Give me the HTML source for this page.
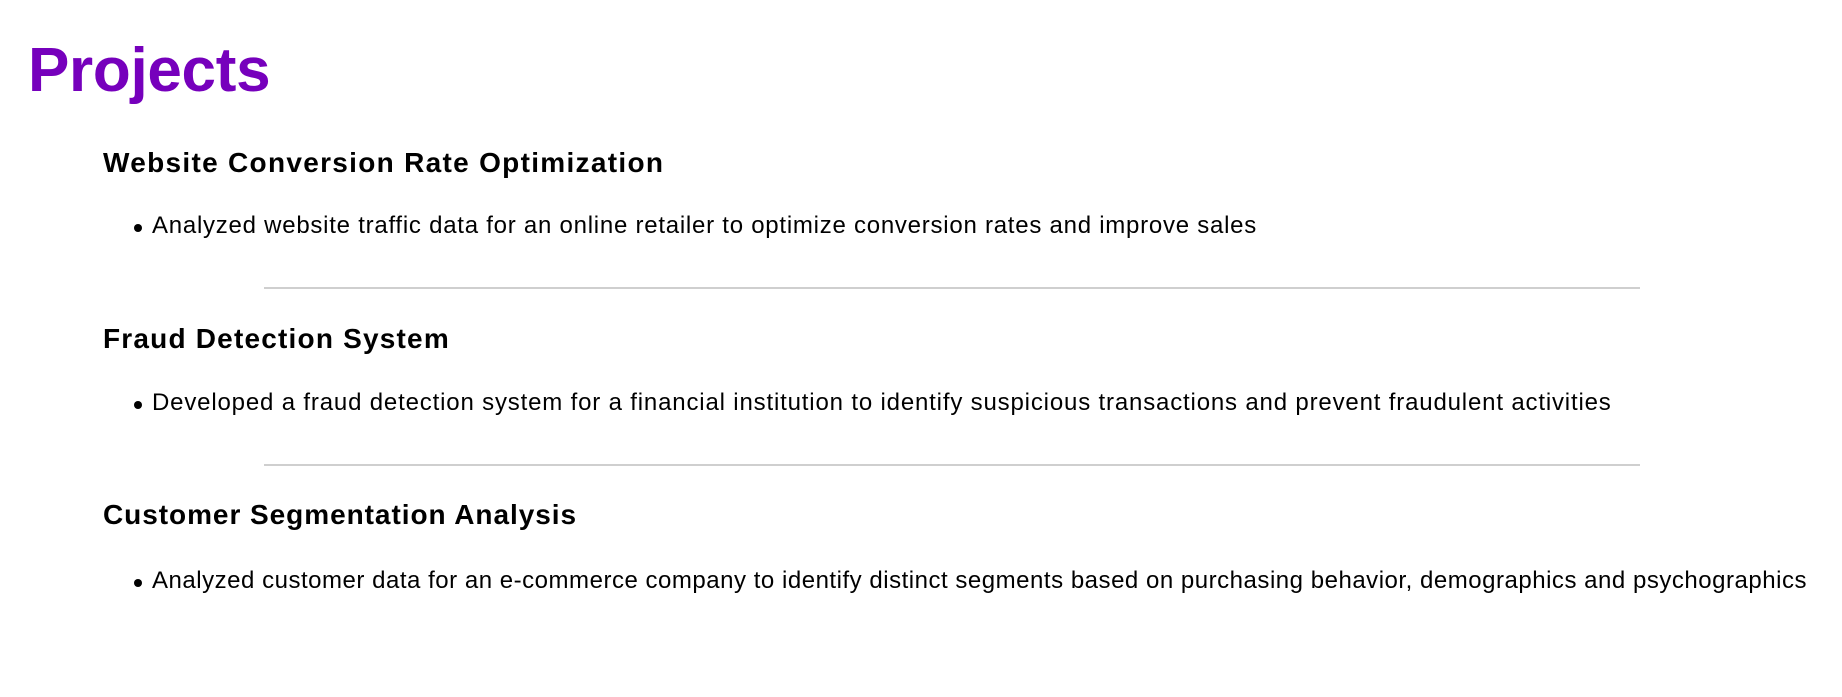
<!DOCTYPE html>
<html><head><meta charset="utf-8"><style>
html,body{margin:0;padding:0;background:#fff;width:1842px;height:697px;overflow:hidden;}
body{position:relative;font-family:"Liberation Sans","DejaVu Sans",sans-serif;color:#000;}
.a{position:absolute;white-space:nowrap;line-height:1;}
h1.a{margin:0;font-size:62px;font-weight:bold;color:#7600bc;letter-spacing:-0.3px;}
h3.a{margin:0;font-size:28px;font-weight:bold;letter-spacing:1.1px;}
.t{font-size:24px;letter-spacing:0.75px;}
.d{position:absolute;width:8px;height:8px;border-radius:50%;background:#000;}
.hr{position:absolute;left:264px;width:1376px;height:2px;background:#cfcfcf;}
</style></head><body>
<h1 class="a" style="left:28px;top:40px">Projects</h1>

<h3 class="a" style="left:103px;top:149px;letter-spacing:1.3px">Website Conversion Rate Optimization</h3>
<div class="d" style="left:134px;top:224px"></div>
<div class="a t" style="left:152px;top:214px">Analyzed website traffic data for an online retailer to optimize conversion rates and improve sales</div>
<div class="hr" style="top:287px"></div>

<h3 class="a" style="left:103px;top:325px;letter-spacing:1.2px">Fraud Detection System</h3>
<div class="d" style="left:134px;top:401px"></div>
<div class="a t" style="left:152px;top:391px;letter-spacing:0.83px">Developed a fraud detection system for a financial institution to identify suspicious transactions and prevent fraudulent activities</div>
<div class="hr" style="top:464px"></div>

<h3 class="a" style="left:103px;top:501px;letter-spacing:0.95px">Customer Segmentation Analysis</h3>
<div class="d" style="left:134px;top:579px"></div>
<div class="a t" style="left:152px;top:569px;letter-spacing:0.52px">Analyzed customer data for an e-commerce company to identify distinct segments based on purchasing behavior, demographics and psychographics</div>
</body></html>
